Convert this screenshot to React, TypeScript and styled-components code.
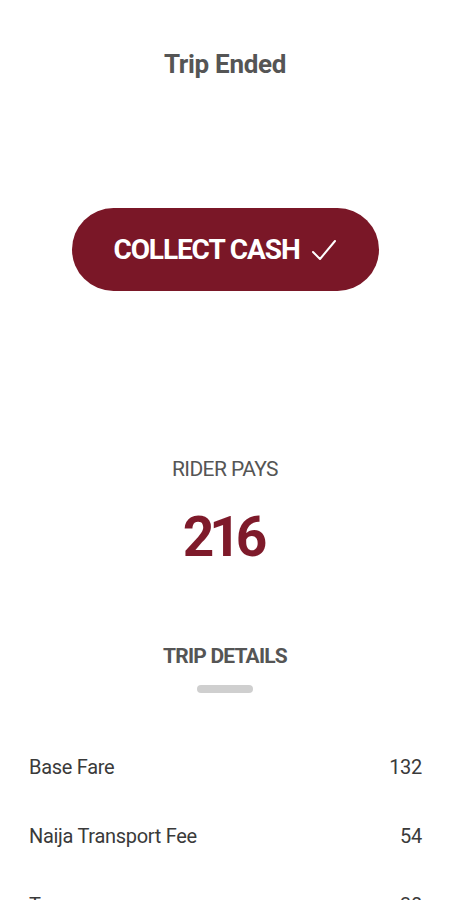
import React from "react";
import styled, { createGlobalStyle } from "styled-components";

const Global = createGlobalStyle`
  html, body { margin: 0; padding: 0; background: #fff; }
  body { font-family: Roboto, "Noto Sans", sans-serif; overflow: hidden; }
`;

const Screen = styled.div`
  width: 450px;
  height: 900px;
  overflow: hidden;
  display: flex;
  flex-direction: column;
  align-items: center;
  background: #fff;
  & > * { flex-shrink: 0; }
`;

const Title = styled.h1`
  margin: 47px 0 0;
  font-size: 26px;
  line-height: 34px;
  font-weight: 700;
  letter-spacing: -0.3px;
  color: #555;
`;

const CollectButton = styled.button`
  margin-top: 127px;
  width: 307px;
  height: 83px;
  padding: 0;
  border: none;
  border-radius: 42px;
  background: #7a1727;
  color: #fff;
  font-family: Roboto, sans-serif;
  font-size: 28px;
  font-weight: 700;
  letter-spacing: -1.1px;
  display: flex;
  align-items: center;
  justify-content: center;
  gap: 11px;
`;

const Label = styled.div`
  margin-top: 164px;
  font-size: 21px;
  line-height: 28px;
  letter-spacing: -0.6px;
  color: #555;
`;

const Amount = styled.div`
  margin-top: 22px;
  font-size: 55px;
  line-height: 64px;
  font-weight: 700;
  letter-spacing: -5px;
  padding-right: 5px;
  color: #7e1a2a;
`;

const SectionTitle = styled.div`
  margin-top: 73px;
  font-size: 21px;
  line-height: 28px;
  font-weight: 700;
  letter-spacing: -0.8px;
  color: #555;
`;

const Handle = styled.div`
  margin-top: 15px;
  width: 56px;
  height: 8px;
  border-radius: 4px;
  background: #cfcfcf;
`;

const List = styled.div`
  margin-top: 60px;
  align-self: stretch;
  padding: 0 28px 0 29px;
  display: flex;
  flex-direction: column;
  gap: 41px;
`;

const Row = styled.div`
  display: flex;
  justify-content: space-between;
  font-size: 20px;
  line-height: 28px;
  letter-spacing: -0.3px;
  color: #3a3a3a;
`;

const rows = [
  ["Base Fare", "132"],
  ["Naija Transport Fee", "54"],
  ["Tax", "30"],
];

export default function App() {
  return (
    <Screen>
      <Global />
      <Title>Trip Ended</Title>
      <CollectButton>
        COLLECT CASH
        <svg width="26" height="23" viewBox="0 0 26 23">
          <path d="M2 14 L9 21 L24 3" fill="none" stroke="#fff" strokeWidth="2" strokeLinecap="round" strokeLinejoin="round" />
        </svg>
      </CollectButton>
      <Label>RIDER PAYS</Label>
      <Amount>216</Amount>
      <SectionTitle>TRIP DETAILS</SectionTitle>
      <Handle />
      <List>
        {rows.map(([k, v]) => (
          <Row key={k}>
            <span>{k}</span>
            <span>{v}</span>
          </Row>
        ))}
      </List>
    </Screen>
  );
}
